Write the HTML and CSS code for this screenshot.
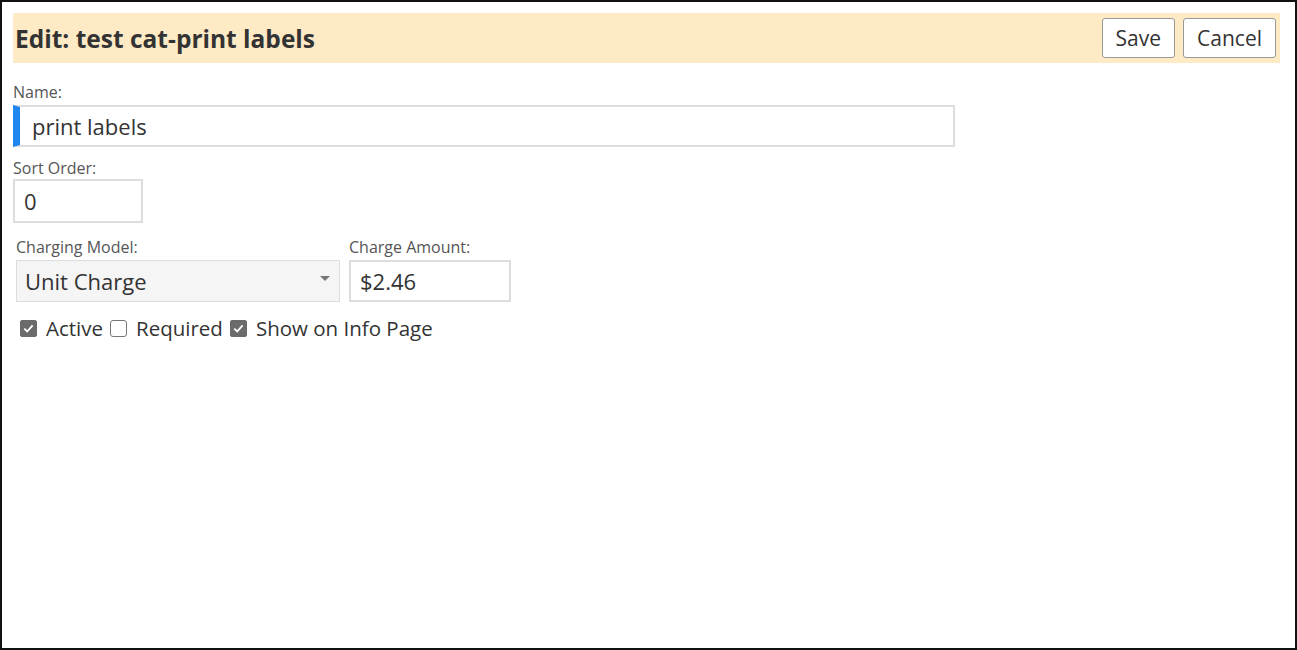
FILE: index.html
```html
<!DOCTYPE html>
<html lang="en">
  <head>
    <title>Edit: test cat-print labels</title>
    <link rel="stylesheet" href="styles.css">
  </head>
  <body>
    <div class="frame">
      <div class="edit-header">
        <h2 class="edit-title">Edit: test cat-print labels</h2>
        <div class="header-btns">
          <button class="btn">Save</button>
          <button class="btn">Cancel</button>
        </div>
      </div>

      <div class="field">
        <label class="field-label">Name:</label>
        <input type="text" class="text-input name-input" value="print labels" />
      </div>

      <div class="field">
        <label class="field-label">Sort Order:</label>
        <input type="text" class="text-input sort-input" value="0" />
      </div>

      <div class="field-row">
        <div class="field">
          <label class="field-label">Charging Model:</label>
          <div class="select-wrap">
            <select class="model-select">
              <option>Unit Charge</option>
              <option>Flat Charge</option>
            </select>
          </div>
        </div>
        <div class="field">
          <label class="field-label">Charge Amount:</label>
          <input type="text" class="text-input amount-input" value="$2.46" />
        </div>
      </div>

      <!-- checkbox boxes drawn by hand so they keep their size -->
      <div class="check-row">
        <label class="check">
          <span class="box is-checked">
            <svg viewBox="0 0 16 16"><polyline points="3.5,8.2 6.6,11.2 12.4,4.6" /></svg>
          </span>
          Active
        </label>
        <label class="check">
          <span class="box"></span>
          Required
        </label>
        <label class="check">
          <span class="box is-checked">
            <svg viewBox="0 0 16 16"><polyline points="3.5,8.2 6.6,11.2 12.4,4.6" /></svg>
          </span>
          Show on Info Page
        </label>
      </div>
    </div>
  </body>
</html>
```

FILE: styles.css
```css
body {
  margin: 0;
  font-family: "Open Sans", "Liberation Sans", sans-serif;
  color: #333;
}

/* outer window frame */
.frame {
  box-sizing: border-box;
  height: 650px;
  border: 2px solid #111;
  padding: 11px 15px 0 11px;
}

/* peach title bar with buttons */
.edit-header {
  display: flex;
  align-items: center;
  justify-content: space-between;
  background-color: #ffeac6;
  height: 50px;
  padding: 0 4px 0 2px;
}
.edit-title {
  margin: 0;
  font-size: 24.5px;
  font-weight: bold;
  color: #333;
}
.header-btns {
  display: flex;
  gap: 8px;
}
.btn {
  font-family: inherit;
  font-size: 21px;
  color: #333;
  background-color: white;
  border: 1px solid #999;
  border-radius: 3px;
  height: 40px;
  padding: 0 13px;
}

/* form fields */
.field {
  display: flex;
  flex-direction: column;
  align-items: flex-start;
  margin-top: 11px;
}
.edit-header + .field {
  margin-top: 19px;
}
.field-label {
  font-size: 16px;
  line-height: 20px;
  color: #555;
  margin-bottom: 3px;
}
.text-input {
  box-sizing: border-box;
  font-family: inherit;
  font-size: 22px;
  color: #333;
  border: 2px solid #ddd;
  padding: 0 9px;
  height: 42px;
  outline: none;
}
.name-input {
  width: 942px;
  border-left: 7px solid #1e88f0;
  padding-left: 12px;
}
.sort-input {
  width: 130px;
  height: 44px;
  margin-top: -2px;
}
.amount-input {
  width: 162px;
}

.field-row {
  display: flex;
  gap: 9px;
  padding-left: 3px;
}
.field-row .field {
  margin-top: 14px;
}

/* select with its own arrow */
.select-wrap {
  position: relative;
}
.select-wrap::after {
  content: "";
  position: absolute;
  right: 10px;
  top: 16px;
  border-left: 5px solid transparent;
  border-right: 5px solid transparent;
  border-top: 5px solid #777;
}
.model-select {
  appearance: none;
  box-sizing: border-box;
  width: 324px;
  height: 42px;
  font-family: inherit;
  font-size: 22px;
  color: #333;
  background-color: #f5f5f5;
  border: 1px solid #ddd;
  padding: 0 8px;
  outline: none;
}

/* checkboxes */
.check-row {
  display: flex;
  gap: 7px;
  margin-top: 13px;
  padding-left: 7px;
  font-size: 20.5px;
  line-height: 26px;
}
.check {
  display: flex;
  align-items: center;
  gap: 9px;
}
.box {
  flex-shrink: 0;
  box-sizing: border-box;
  width: 17px;
  height: 17px;
  border: 1px solid #777;
  border-radius: 3px;
  background-color: white;
}
.box.is-checked {
  background-color: #6b6b6b;
  border-color: #6b6b6b;
  border-radius: 2px;
}
.box svg {
  display: block;
  width: 15px;
  height: 15px;
  fill: none;
  stroke: white;
  stroke-width: 2;
}
```
